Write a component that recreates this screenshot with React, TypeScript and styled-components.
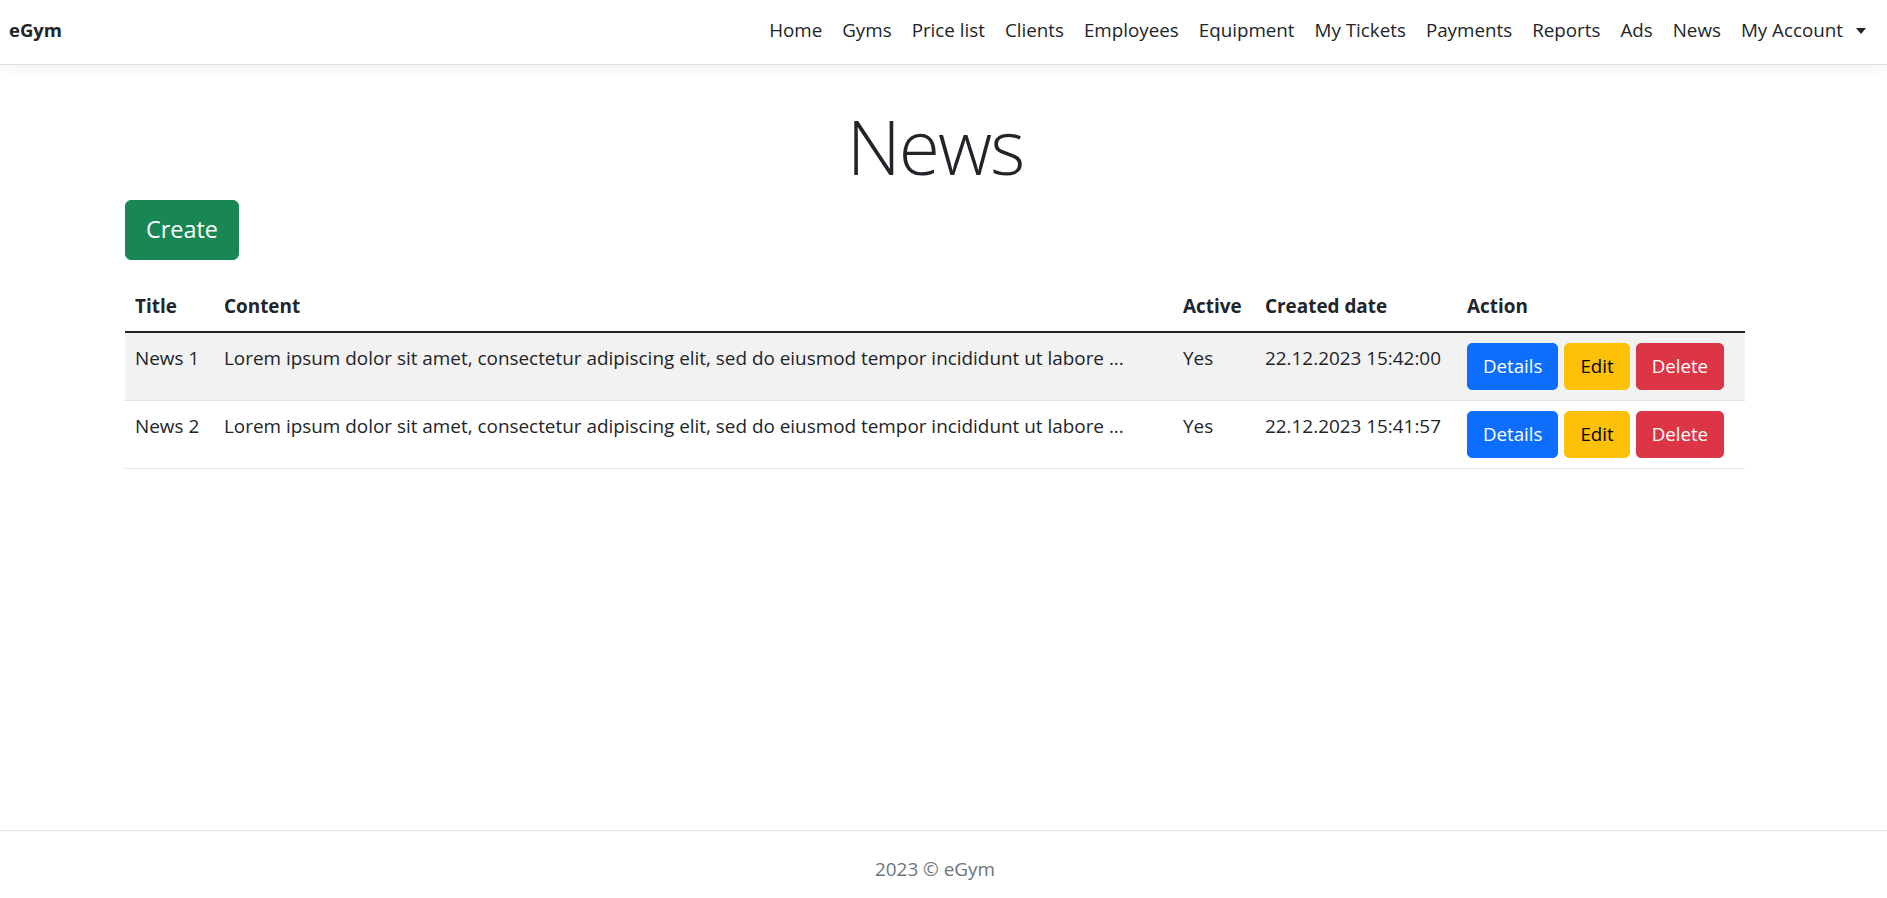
import React from "react";
import styled, { createGlobalStyle } from "styled-components";

const GlobalStyle = createGlobalStyle`
  html, body { margin: 0; padding: 0; }
  body {
    font-family: "Open Sans", "Noto Sans", sans-serif;
    font-size: 18.9px;
    line-height: 30px;
    color: #212529;
    background: #fff;
  }
  * { box-sizing: border-box; }
`;

const Page = styled.div`
  min-height: 100vh;
  display: flex;
  flex-direction: column;
`;

const NavBar = styled.header`
  height: 65px;
  border-bottom: 1px solid #dee2e6;
  box-shadow: 0 5px 15px rgba(0, 0, 0, 0.05);
  display: flex;
  align-items: center;
  justify-content: space-between;
  padding: 0 11px 4px 9px;
  flex-shrink: 0;
`;

const Brand = styled.a`
  font-size: 18.5px;
  font-weight: 700;
  color: #212529;
  text-decoration: none;
  line-height: 30px;
`;

const NavList = styled.nav`
  display: flex;
  align-items: center;
`;

const NavLink = styled.a`
  display: inline-flex;
  align-items: center;
  padding: 0 10px;
  font-size: 18.8px;
  line-height: 30px;
  color: #212529;
  text-decoration: none;
  white-space: nowrap;
`;

const Caret = styled.span`
  display: inline-block;
  margin-left: 13px;
  margin-top: 1px;
  width: 0;
  height: 0;
  border-top: 6px solid #212529;
  border-left: 5px solid transparent;
  border-right: 5px solid transparent;
`;

const Main = styled.main`
  flex: 1;
  padding-right: 17px;
`;

const Container = styled.div`
  max-width: 1650px;
  margin: 0 auto;
  padding: 36px 15px 20px;
`;

const Title = styled.h1`
  margin: 0 0 9px;
  text-align: center;
  font-family: "Open Sans", "Noto Sans", sans-serif;
  font-weight: 300;
  font-size: 75px;
  line-height: 90px;
  letter-spacing: -2px;
`;

const CreateButton = styled.button`
  display: inline-block;
  border: 1px solid #198754;
  background: #198754;
  color: #fff;
  font-family: inherit;
  font-size: 23.4px;
  line-height: 37.5px;
  padding: 10px 20px;
  border-radius: 6px;
  cursor: pointer;
`;

const Table = styled.table`
  margin-top: 21px;
  width: 100%;
  border-collapse: collapse;
  table-layout: fixed;
`;

const Th = styled.th`
  text-align: left;
  font-weight: 700;
  padding: 10px;
  line-height: 30px;
  border-bottom: 2px solid #212529;
  white-space: nowrap;
`;

const Row = styled.tr<{ $striped?: boolean }>`
  background: ${(p) => (p.$striped ? "#f2f2f2" : "transparent")};
`;

const Td = styled.td`
  padding: 10px;
  line-height: 30px;
  vertical-align: top;
  border-bottom: 1px solid #dee2e6;
  white-space: nowrap;
  overflow: hidden;
`;

const ActionGroup = styled.div`
  display: flex;
  gap: 6px;
`;

const variants = {
  primary: { bg: "#0d6efd", fg: "#fff" },
  warning: { bg: "#ffc107", fg: "#000" },
  danger: { bg: "#dc3545", fg: "#fff" },
};

const ActionButton = styled.button<{ $variant: keyof typeof variants }>`
  border: 1px solid ${(p) => variants[p.$variant].bg};
  background: ${(p) => variants[p.$variant].bg};
  color: ${(p) => variants[p.$variant].fg};
  font-family: inherit;
  font-size: 18.7px;
  line-height: 30px;
  padding: 7.5px 15px;
  border-radius: 5px;
  cursor: pointer;
`;

const Footer = styled.footer`
  height: 68px;
  border-top: 1px solid #dee2e6;
  padding: 23px 17px 0 0;
  text-align: center;
  color: #6c757d;
  font-size: 18.9px;
  line-height: 30px;
  flex-shrink: 0;
`;

const navItems = [
  "Home",
  "Gyms",
  "Price list",
  "Clients",
  "Employees",
  "Equipment",
  "My Tickets",
  "Payments",
  "Reports",
  "Ads",
  "News",
];

const lorem =
  "Lorem ipsum dolor sit amet, consectetur adipiscing elit, sed do eiusmod tempor incididunt ut labore ...";

const rows = [
  { title: "News 1", content: lorem, active: "Yes", date: "22.12.2023 15:42:00" },
  { title: "News 2", content: lorem, active: "Yes", date: "22.12.2023 15:41:57" },
];

export default function App() {
  return (
    <>
      <GlobalStyle />
      <Page>
        <NavBar>
          <Brand href="#">eGym</Brand>
          <NavList>
            {navItems.map((n) => (
              <NavLink key={n} href="#">
                {n}
              </NavLink>
            ))}
            <NavLink href="#">
              My Account
              <Caret />
            </NavLink>
          </NavList>
        </NavBar>
        <Main>
          <Container>
            <Title>News</Title>
            <CreateButton>Create</CreateButton>
            <Table>
              <colgroup>
                <col style={{ width: 89 }} />
                <col style={{ width: 959 }} />
                <col style={{ width: 82 }} />
                <col style={{ width: 202 }} />
                <col style={{ width: 288 }} />
              </colgroup>
              <thead>
                <tr>
                  <Th>Title</Th>
                  <Th>Content</Th>
                  <Th>Active</Th>
                  <Th>Created date</Th>
                  <Th>Action</Th>
                </tr>
              </thead>
              <tbody>
                {rows.map((r, i) => (
                  <Row key={r.title} $striped={i % 2 === 0}>
                    <Td>{r.title}</Td>
                    <Td>{r.content}</Td>
                    <Td>{r.active}</Td>
                    <Td>{r.date}</Td>
                    <Td>
                      <ActionGroup>
                        <ActionButton $variant="primary">Details</ActionButton>
                        <ActionButton $variant="warning">Edit</ActionButton>
                        <ActionButton $variant="danger">Delete</ActionButton>
                      </ActionGroup>
                    </Td>
                  </Row>
                ))}
              </tbody>
            </Table>
          </Container>
        </Main>
        <Footer>2023 © eGym</Footer>
      </Page>
    </>
  );
}
